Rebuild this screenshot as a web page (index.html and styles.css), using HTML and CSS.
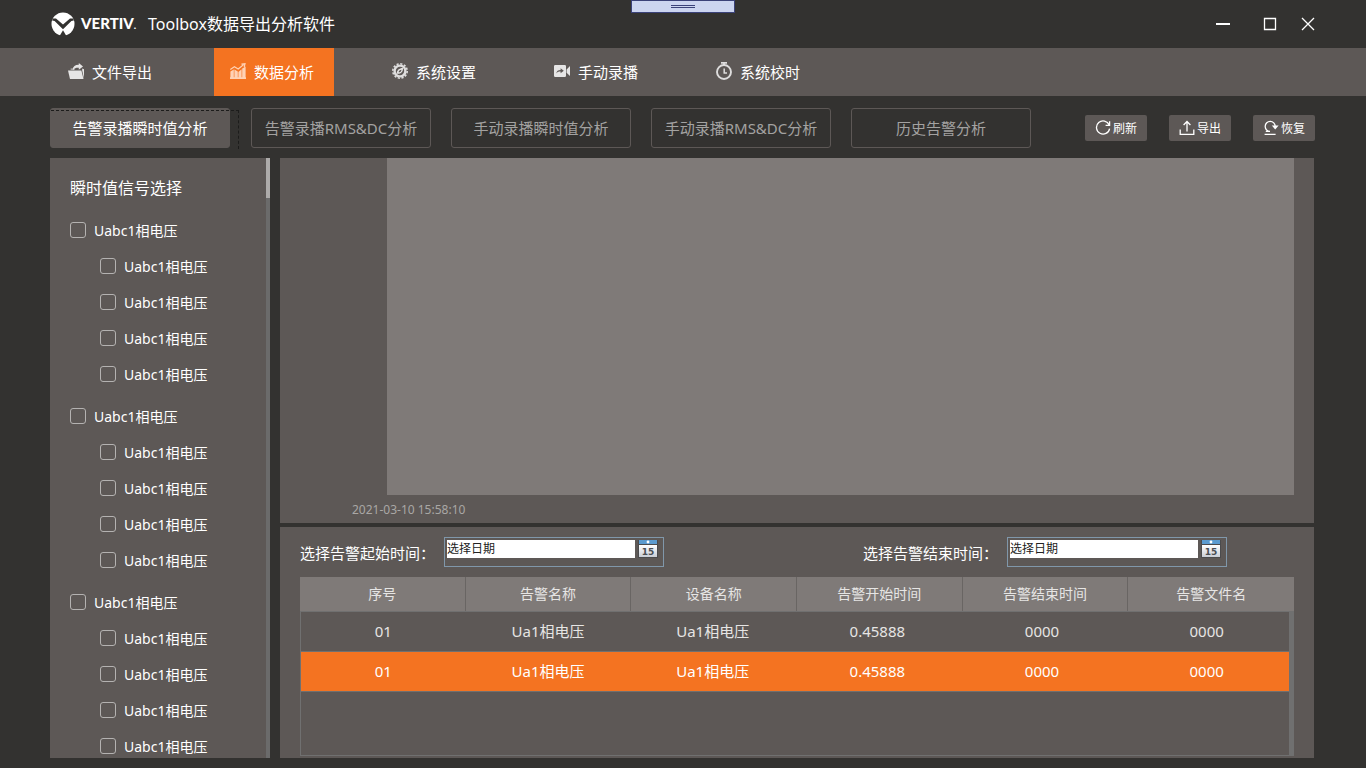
FILE: index.html
```html
<!DOCTYPE html>
<html lang="zh-CN">
<head>
<meta charset="utf-8">
<meta name="viewport" content="width=device-width, initial-scale=1">
<title>Toolbox数据导出分析软件</title>
<link rel="stylesheet" href="styles.css">
</head>
<body>
<div class="app">
  <button class="drag-handle" type="button" aria-label="工具条"><span></span></button>

  <header class="titlebar">
    <svg class="logo" viewBox="0 0 24 24" aria-hidden="true">
      <circle cx="12" cy="12" r="11.5" fill="#fff"/>
      <path d="M1.6 6.4 5 6.6 12 12.4 19 6.6 22.4 6.4 22.8 8.6 20.4 9 12 17.2 3.6 9 1.2 8.6Z" fill="#333230"/>
      <path d="M12 18.2 15.4 24H8.6Z" fill="#333230"/>
    </svg>
    <span class="brand">VERTIV<small>.</small></span>
    <h1 class="title">Toolbox数据导出分析软件</h1>
    <div class="window-controls">
      <button type="button" aria-label="最小化"><svg viewBox="0 0 14 14"><path d="M0 7H14" stroke-width="2"/></svg></button>
      <button type="button" aria-label="最大化"><svg viewBox="0 0 14 14"><path d="M1.5 1.5H12.5V12.5H1.5Z"/></svg></button>
      <button type="button" aria-label="关闭"><svg viewBox="0 0 14 14"><path d="M1 1 13 13M13 1 1 13"/></svg></button>
    </div>
  </header>

  <nav class="nav">
    <a href="#" class="nav-item">
      <svg viewBox="0 0 16 16"><path d="M0 7.5H13.4L15.5 16H2Z"/><path d="M2.6 6.8V5.4H6L7 6.8Z" opacity=".7"/><path d="M14.2 7.4V5.6L16 6.2V15.6Z"/><path d="M4.6 6.6C5 3.4 7.6 1.6 10.8 1.8V0L15 3.4 10.8 6.8V4.8C8.5 4.6 6.6 5 5.6 6.8Z"/></svg>
      文件导出</a>
    <a href="#" class="nav-item active">
      <svg viewBox="0 0 16 16"><path d="M0 14.2H16V16H0Z M.4 8.4 3.8 6.4V14.4H.4Z M4.4 6.4 7.8 8.6V14.4H4.4Z M8.4 9 11.6 6.2V14.4H8.4Z M12.2 5.6 15.6 3.4V14.4H12.2Z"/><path d="M.3 6.4 4.4 3.8 8.2 6 13.5 1.8M11.4 1.2 15 .8 14.2 4" fill="none" stroke="#ffd2b5" stroke-width="1.2"/></svg>
      数据分析</a>
    <a href="#" class="nav-item">
      <svg viewBox="0 0 16 16"><circle cx="8" cy="8" r="7.2" fill="none" stroke="#dedddd" stroke-width="1.6" stroke-dasharray="2.2 1.57"/><circle cx="8" cy="8" r="5.4" fill="none" stroke="#dedddd" stroke-width="2.4"/><path d="M4.8 10.8C4.8 7.2 7 5 11 5 11.2 9 8.8 11.2 4.8 10.8ZM6.6 9.3C8.2 9.4 9.2 8.6 9.5 6.7 7.9 6.8 6.8 7.6 6.6 9.3Z" fill-rule="evenodd"/></svg>
      系统设置</a>
    <a href="#" class="nav-item">
      <svg viewBox="0 0 16 16"><path d="M1.2 2H10.8Q12 2 12 3.2V12.8Q12 14 10.8 14H1.2Q0 14 0 12.8V3.2Q0 2 1.2 2Z M12.6 6.4 16 3V13L12.6 9.8Z"/><path d="M2.2 10.4C2.6 8 4.2 6.9 6.6 6.9V5.2L9.8 7.8 6.6 10.2V8.6C4.8 8.5 3.2 9.2 2.2 10.4Z" fill="#5d5856"/></svg>
      手动录播</a>
    <a href="#" class="nav-item">
      <svg viewBox="0 0 16 18"><g fill="none" stroke="#dedddd"><circle cx="8" cy="10" r="7" stroke-width="1.9"/><path d="M5 .9H11M8 1V3" stroke-width="1.8"/><path d="M8.2 6.5V11H11" stroke-width="1.5"/></g></svg>
      系统校时</a>
  </nav>

  <div class="toolbar">
    <div class="tabs">
      <button type="button" class="tab selected">告警录播瞬时值分析</button>
      <button type="button" class="tab">告警录播RMS&amp;DC分析</button>
      <button type="button" class="tab">手动录播瞬时值分析</button>
      <button type="button" class="tab">手动录播RMS&amp;DC分析</button>
      <button type="button" class="tab">历史告警分析</button>
    </div>
    <div class="actions">
      <button type="button" class="action"><svg viewBox="0 0 16 16"><path d="M14.2 5A6.6 6.6 0 1 0 14.6 8.6M14.6 1.2V5.4H10.6"/></svg>刷新</button>
      <button type="button" class="action"><svg viewBox="0 0 16 16"><path d="M1.2 9.5V14.3H14.8V9.5M8 11.5V1.8M4.6 5 8 1.5 11.4 5"/></svg>导出</button>
      <button type="button" class="action"><svg viewBox="0 0 16 16"><path d="M7 11.4A5 5 0 1 1 12.2 6.4M1.6 14.4H12.6M7 11.4H2.8"/><path d="M8.8 5.4H15.6L12.2 9.4Z" fill="#fff" stroke="none"/></svg>恢复</button>
    </div>
  </div>

  <main class="main">
    <aside class="sidebar">
      <div class="signals">
        <h2>瞬时值信号选择</h2>
        <div class="group">
          <label><input type="checkbox">Uabc1相电压</label>
          <label class="child"><input type="checkbox">Uabc1相电压</label>
          <label class="child"><input type="checkbox">Uabc1相电压</label>
          <label class="child"><input type="checkbox">Uabc1相电压</label>
          <label class="child"><input type="checkbox">Uabc1相电压</label>
        </div>
        <div class="group">
          <label><input type="checkbox">Uabc1相电压</label>
          <label class="child"><input type="checkbox">Uabc1相电压</label>
          <label class="child"><input type="checkbox">Uabc1相电压</label>
          <label class="child"><input type="checkbox">Uabc1相电压</label>
          <label class="child"><input type="checkbox">Uabc1相电压</label>
        </div>
        <div class="group">
          <label><input type="checkbox">Uabc1相电压</label>
          <label class="child"><input type="checkbox">Uabc1相电压</label>
          <label class="child"><input type="checkbox">Uabc1相电压</label>
          <label class="child"><input type="checkbox">Uabc1相电压</label>
          <label class="child"><input type="checkbox">Uabc1相电压</label>
        </div>
      </div>
      <div class="scroll-track"><div class="scroll-thumb"></div></div>
    </aside>

    <div class="content">
      <section class="chart">
        <div class="plot"></div>
        <time class="axis-time">2021-03-10 15:58:10</time>
      </section>

      <section class="records">
        <div class="filters">
          <div class="filter">
            <label for="start">选择告警起始时间：</label>
            <div class="date-box">
              <input id="start" type="text" value="选择日期">
              <button type="button" aria-label="打开日历"><svg viewBox="0 0 20 18"><use href="#cal"/></svg></button>
            </div>
          </div>
          <div class="filter">
            <label for="end">选择告警结束时间：</label>
            <div class="date-box">
              <input id="end" type="text" value="选择日期">
              <button type="button" aria-label="打开日历"><svg viewBox="0 0 20 18"><use href="#cal"/></svg></button>
            </div>
          </div>
        </div>

        <table class="grid">
          <thead>
            <tr><th>序号</th><th>告警名称</th><th>设备名称</th><th>告警开始时间</th><th>告警结束时间</th><th>告警文件名</th></tr>
          </thead>
          <tbody>
            <tr><td>01</td><td>Ua1相电压</td><td>Ua1相电压</td><td>0.45888</td><td>0000</td><td>0000</td></tr>
            <tr class="selected"><td>01</td><td>Ua1相电压</td><td>Ua1相电压</td><td>0.45888</td><td>0000</td><td>0000</td></tr>
          </tbody>
        </table>
      </section>
    </div>
  </main>

  <svg class="defs" aria-hidden="true">
    <defs>
      <linearGradient id="page" x1="0" y1="0" x2="0" y2="1"><stop offset="0" stop-color="#fff"/><stop offset="1" stop-color="#c9ced6"/></linearGradient>
      <g id="cal">
        <path d="M0 0H20V18H0Z" fill="#4b4b4d"/>
        <path d="M1 0H19V4H1Z" fill="#5b9bd0"/>
        <circle cx="10" cy="2" r="1.4" fill="#fff"/>
        <path d="M1 5H19V17H1Z" fill="url(#page)"/>
        <text x="10" y="15" text-anchor="middle" font-family="DejaVu Sans" font-weight="bold" font-size="9" fill="#4a4e53">15</text>
      </g>
    </defs>
  </svg>
</div>
</body>
</html>
```

FILE: styles.css
```css
:root {
  --bg: #333230;
  --panel: #5d5856;
  --raised: #7f7a78;
  --accent: #f47321;
  --line: #707070;
}

* { box-sizing: border-box; }

body {
  margin: 0;
  background: var(--bg);
  color: #fff;
  font-family: "Noto Sans", "Noto Sans CJK SC", sans-serif;
  font-size: 14px;
}

button, input {
  font: inherit;
  color: inherit;
  margin: 0;
  padding: 0;
  border: 0;
  background: none;
}

.app {
  display: flex;
  flex-direction: column;
  height: 100vh;
  overflow: hidden;
}

.defs { position: absolute; width: 0; height: 0; }

.drag-handle {
  position: absolute;
  top: 0;
  left: 50%;
  width: 104px;
  height: 13px;
  margin-left: -52px;
  display: flex;
  align-items: center;
  justify-content: center;
  background: #ccd5f0;
  border: 1px solid #3b4279;
}

.drag-handle span {
  width: 24px;
  height: 3px;
  border: solid #3b4279;
  border-width: 1px 0;
}

/* Title bar */
.titlebar {
  flex: 0 0 48px;
  display: flex;
  align-items: center;
  padding: 0 51px;
}

.logo { width: 24px; height: 24px; margin-right: 6px; }

.brand {
  width: 67px;
  font: 900 15px/24px Lato, sans-serif;
}

.brand small { font-size: 10px; }

.title {
  margin: 0;
  font-size: 16px;
  line-height: 24px;
  font-weight: 400;
}

.window-controls {
  display: flex;
  align-items: center;
  margin-left: auto;
}

.window-controls button { display: flex; margin-left: 24px; }
.window-controls button:nth-child(2) { margin-left: 33px; }

.window-controls svg {
  width: 14px;
  height: 14px;
  fill: none;
  stroke: #fff;
  stroke-width: 1.3;
}

/* Main navigation */
.nav {
  flex: 0 0 48px;
  display: flex;
  gap: 42px;
  padding: 0 52px;
  background: var(--panel);
}

.nav-item {
  width: 120px;
  display: flex;
  align-items: center;
  gap: 8px;
  padding: 0 0 2px 16px;
  color: #fff;
  font-size: 15px;
  text-decoration: none;
  white-space: nowrap;
}

.nav-item svg { width: 16px; height: 18px; fill: #e6e5e5; }
.nav-item.active { background: var(--accent); }
.nav-item.active svg { fill: #ffd2b5; }

/* Analysis tabs and actions */
.toolbar {
  flex: 0 0 62px;
  display: flex;
  align-items: center;
  justify-content: space-between;
  padding: 2px 51px 0 50px;
}

.tabs { display: flex; gap: 20px; }

.tab {
  position: relative;
  width: 180px;
  height: 40px;
  padding-bottom: 2px;
  border: 1px solid var(--panel);
  border-radius: 3px;
  color: #a3a2a1;
  font-size: 15px;
  white-space: nowrap;
}

.tab.selected {
  margin-right: 1px;
  background: var(--panel);
  color: #fff;
}

.tab.selected::after {
  content: "";
  position: absolute;
  top: 1px;
  left: 0;
  width: 187px;
  height: 38px;
  border: dashed #1c1c1b;
  border-width: 1px 1px 0 0;
}

.actions { display: flex; gap: 22px; }

.action {
  width: 62px;
  height: 26px;
  display: flex;
  align-items: center;
  justify-content: center;
  gap: 2px;
  border-radius: 2px;
  background: var(--panel);
  font-size: 12px;
}

.action svg {
  width: 16px;
  height: 16px;
  fill: none;
  stroke: #fff;
  stroke-width: 1.3;
}

/* Work area */
.main {
  flex: 1;
  min-height: 0;
  display: flex;
  gap: 10px;
  padding: 0 52px 10px 50px;
}

.sidebar {
  flex: 0 0 220px;
  display: flex;
  background: var(--panel);
  overflow: hidden;
}

.signals { flex: 1; padding: 18px 0 0 20px; }

.signals h2 {
  margin: 0 0 12px;
  font-size: 16px;
  line-height: 24px;
  font-weight: 400;
}

.group { margin-bottom: 6px; }

.group label {
  display: flex;
  align-items: center;
  gap: 8px;
  height: 36px;
}

.group .child { padding-left: 30px; }

.group input {
  appearance: none;
  width: 16px;
  height: 16px;
  border: 1px solid #b4b2b1;
  border-radius: 3px;
}

.group input:checked { background: var(--accent); }

.scroll-track { width: 4px; background: #6b6b6b; }
.scroll-thumb { height: 40px; background: #adabaa; }

.content {
  flex: 1;
  min-width: 0;
  display: flex;
  flex-direction: column;
  gap: 4px;
}

.chart {
  flex: 1;
  display: flex;
  flex-direction: column;
  padding: 0 20px 4px 72px;
  background: var(--panel);
}

.plot { flex: 1; margin-left: 35px; background: var(--raised); }

.axis-time {
  padding-top: 6px;
  color: #a9a7a5;
  font-size: 12px;
  line-height: 18px;
}

.records {
  flex: 0 0 231px;
  display: flex;
  flex-direction: column;
  gap: 8px;
  padding: 10px 20px 2px;
  background: var(--panel);
}

.filters {
  display: flex;
  justify-content: space-between;
  padding-right: 67px;
}

.filter { display: flex; }

.filter label {
  width: 144px;
  font-size: 15px;
  line-height: 32px;
  white-space: nowrap;
}

.date-box {
  width: 220px;
  height: 30px;
  display: flex;
  align-items: flex-start;
  gap: 3px;
  padding: 2px;
  border: 1px solid #8097aa;
}

.date-box input {
  width: 188px;
  height: 18px;
  background: #fff;
  color: #222;
  font-size: 12px;
  line-height: 18px;
}

.date-box button { display: flex; }
.date-box svg { width: 20px; height: 18px; }

/* Alarm records */
.grid {
  flex: 1;
  display: flex;
  flex-direction: column;
}

.grid tr { display: grid; grid-template-columns: repeat(6, 1fr); }

.grid th {
  padding: 0;
  height: 34px;
  border-right: 1px solid #696563;
  background: var(--raised);
  color: #e6e5e4;
  font-weight: 400;
  line-height: 34px;
}

.grid th:last-child { border-right: 0; }

.grid tbody {
  flex: 1;
  border: 1px solid var(--line);
  border-right-width: 5px;
}

.grid tbody tr { border-bottom: 1px solid var(--line); }

.grid td {
  padding: 0;
  height: 39px;
  color: #e6e5e4;
  font-size: 15px;
  line-height: 39px;
  text-align: center;
}

.grid .selected { background: var(--accent); }
.grid .selected td { color: #fff; }
```
